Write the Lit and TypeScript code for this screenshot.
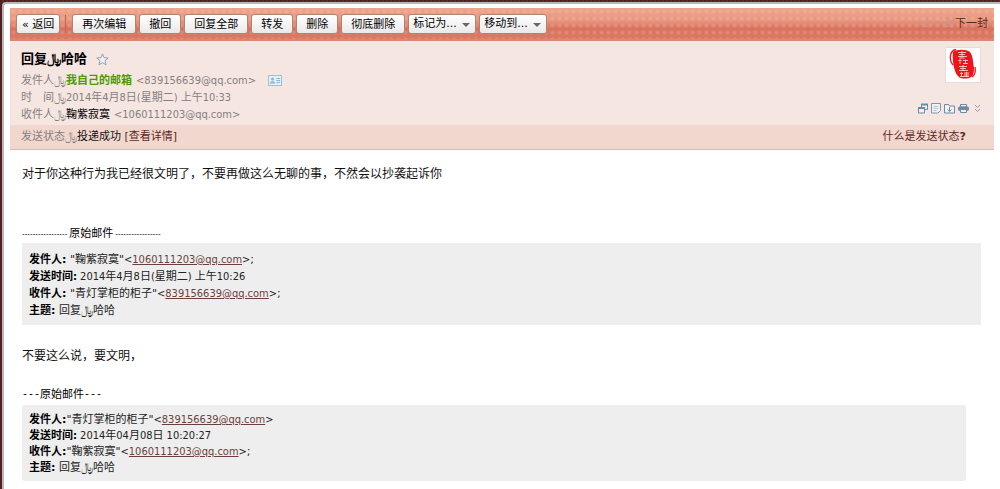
import { LitElement, html, css } from "lit";
import { customElement } from "lit/decorators.js";

const RIAL = "\uFDFC\u200E";

const star = html`<svg width="13" height="13" viewBox="0 0 13 13" fill="#f3f0f2" stroke="#8fa0b5" aria-hidden="true"><path d="M6.500 .9 8 4.700l4.200.3-3.200 2.700 1 4.200-3.500-2.300L3 11.900l1-4.200L.8 5l4.200-.3z"/></svg>`;

const card = html`<svg width="14" height="11" viewBox="0 0 14 11" aria-hidden="true">
  <rect x=".5" y=".5" width="13" height="10" fill="#e3eef6" stroke="#a3bfd6"/>
  <circle cx="4.500" cy="4" r="1.500" fill="#8fb2d0"/><path d="M2 8.500c0-3 5-3 5 0z" fill="#8fb2d0"/>
  <path d="M8.500 3.500H12M8.500 5.500H12M8.500 7.500H12" stroke="#8fb2d0"/></svg>`;

const seal = html`<svg width="34" height="34" viewBox="0 0 34 34" aria-hidden="true">
  <path d="M7 4C11 1 20 1 24 4c3 4 3 10 4 16 0 6-1 9-5 10-4 1-9 1-11-2C8 24 6 12 7 4z" fill="#f01418"/>
  <path d="M10 1.500C3 3 3 12 7 17M29 19c1 5 0 8-3 10" fill="none" stroke="#f01418" stroke-width="1.300"/>
  <g fill="none" stroke="#ffd0cc" stroke-width=".9">
    <path d="M12 4.500h8M13 6.500h6M16 3v6M12 8.500h9M13.500 10h5"/>
    <path d="M12.500 12.500h3M14 11v5M17 12.500h5M19.500 11.500v4.500M17 15.500h5"/>
    <path d="M13 18.500h8M14 20.500h6M17 17v6M13 22.500h9"/>
    <path d="M14 25.500h3M15.500 24v5M18 25h5M18 27h5M20.500 24v5M14 28.500h9"/>
  </g></svg>`;

const tools = [
  { label: "新窗口打开", icon: html`<svg width="10" height="11" viewBox="0 0 10 11" fill="#eef2f5" stroke="#6f8aa3"><path d="M3.500 1.500h6v5h-6z"/><path d="M3 1.500h7" stroke-width="2"/><path d="M.5 4.500h6v5.500h-6z"/><path d="M0 5h7" stroke-width="2"/></svg>` },
  { label: "添加备注", icon: html`<svg width="10" height="11" viewBox="0 0 10 11" fill="#eef2f5" stroke="#7f98ae"><path d="M.5 .5h9v7l-2.500 2.500H.5z"/><path d="M2.500 3.500h5M2.500 5.500h5M2.500 7.500h3" stroke="#b5c5d3"/></svg>` },
  { label: "保存", icon: html`<svg width="11" height="11" viewBox="0 0 11 11" fill="#eef2f5" stroke="#6f8aa3"><path d="M.5 1.500h4l1 1.500h5v7H.5z"/><path d="M5.500 4v4M3.500 6.500l2 2 2-2" fill="none"/></svg>` },
  { label: "打印", icon: html`<svg width="11" height="11" viewBox="0 0 11 11" fill="#eef2f5" stroke="#6f8aa3"><path d="M2.500 1.500h6V4h-6z"/><rect x=".5" y="4" width="10" height="3.500" rx="1" fill="#6f8aa3"/><path d="M2.500 6.500h6v3h-6z"/></svg>` },
  { label: "展开", icon: html`<svg width="7" height="9" viewBox="0 0 7 9" fill="none" stroke="#8a9aa8"><path d="M1 1l2.500 2.500L6 1M1 5l2.500 2.500L6 5"/></svg>` },
];

@customElement("app-root")
export class AppRoot extends LitElement {
  static styles = css`
    * { box-sizing: border-box; }
    :host {
      display: block;
      min-height: 100vh;
      padding: 2px 0 0 2px;
      background: repeating-linear-gradient(90deg, #551f20 0 2px, #642a2b 2px 4px);
      font: 11px/16px "DejaVu Sans", "Noto Sans CJK SC", sans-serif;
      color: #111;
    }
    .sheet {
      min-height: calc(100vh - 2px);
      padding: 4px 6px 8px 6px;
      border: 0 solid #b4bbb8;
      border-width: 2px 0 0 2px;
      border-top-left-radius: 4px;
      background: #fff;
    }
    .bar {
      display: flex;
      align-items: center;
      height: 33px;
      padding: 0 6px;
      gap: 3px;
      border-bottom: 2px solid #d98873;
      background:
        radial-gradient(circle, rgba(255, 205, 180, 0.22) 1px, transparent 3px) 0 0 / 7px 7px,
        linear-gradient(#eda58b, #e89680 40%, #d8735f 65%, #db7863);
    }
    button, select { margin: 0; font: inherit; }
    .btn {
      height: 20px;
      padding: 1px 9px 0;
      border: 1px solid #b08474;
      border-radius: 3px;
      background: linear-gradient(#fff, #e9e9e9);
      line-height: 17px;
      color: #000;
      white-space: nowrap;
    }
    .back { padding: 1px 5px 0; }
    .sep { width: 1px; height: 18px; margin: 0 3px 0 2px; background: #c0695a; }
    .drop { width: 68px; padding: 0 16px 0 4px; appearance: none; }
    .picker { position: relative; display: flex; }
    .caret {
      position: absolute;
      right: 6px;
      top: 9px;
      border: solid transparent;
      border-width: 4px 4px 0;
      border-top-color: #666;
      pointer-events: none;
    }
    .pager { display: flex; margin-left: auto; }
    a { color: #5a2a24; text-decoration: none; }
    .dim { color: #cc9488; }
    .head { display: flex; justify-content: space-between; padding: 9px 13px 2px 11px; background: #f5e6e1; }
    h1 { display: flex; align-items: center; gap: 9px; margin: 0 0 4px; font-size: 13px; line-height: 18px; color: #000; }
    .line { display: flex; align-items: center; gap: 4px; line-height: 17px; color: #858180; }
    .line svg { margin-left: 8px; }
    .date { font-family: "DejaVu Sans Condensed", "Noto Sans CJK SC", sans-serif; }
    .me { color: #4b9b00; font-weight: bold; }
    .name { color: #000; }
    .label { color: #858180; }
    .side { display: flex; flex-direction: column; align-items: flex-end; justify-content: space-between; padding: 0 0 9px; }
    .avatar { width: 36px; height: 36px; margin: -3px 0 0; border: 1px solid #eadbd6; background: #fff; }
    .tools { display: flex; gap: 3px; align-items: center; }
    .tool { display: flex; padding: 0; border: 0; background: none; }
    .tool:last-child { margin-left: 2px; }
    .state { display: flex; justify-content: space-between; padding: 4px 28px 4px 11px; border-bottom: 1px solid #d9bdb5; background: #f2d7cf; }
    .body { padding: 15px 12px 0; }
    p { margin: 0; font-size: 12px; line-height: 18px; }
    .origin { display: flex; align-items: center; gap: 2px; margin-top: 43px; color: #000; }
    .rule { font: 8px/16px "Liberation Sans", sans-serif; }
    .marks { font: 10px/16px "Liberation Mono", monospace; }
    .quote { margin: 1px 1px 0 0; padding: 8px 7px 6px; background: #eee; line-height: 17px; color: #222; }
    .quote + p { margin-top: 22px; }
    p + .origin.plain { margin-top: 22px; gap: 0; }
    .tight { margin: 2px 16px 0 0; padding: 7px 7px 5px; border-radius: 3px; line-height: 16px; }
    .quote a { color: #6b3f3b; text-decoration: underline; }
    .quote b { color: #000; }
  `;

  private link(address: string) {
    return html`<span class="date">&lt;<a href="mailto:${address}">${address}</a>&gt;</span>`;
  }

  render() {
    return html`<main class="sheet">
      <nav class="bar">
        <button class="btn back">« 返回</button><span class="sep"></span>
        ${["再次编辑", "撤回", "回复全部", "转发", "删除", "彻底删除"].map((t) => html`<button class="btn">${t}</button>`)}
        ${["标记为...", "移动到..."].map(
          (t) => html`<span class="picker"><select class="btn drop" aria-label=${t}><option>${t}</option></select><i class="caret"></i></span>`
        )}
        <span class="pager"><a class="dim" href="#prev">上一封</a><a href="#next">下一封</a></span>
      </nav>
      <header class="head">
        <div>
          <h1>回复${RIAL}哈哈 ${star}</h1>
          <div class="line"><span>发件人${RIAL}<span class="me">我自己的邮箱</span></span><span class="date">&lt;839156639@qq.com&gt;</span>${card}</div>
          <div class="line"><span class="date">时　间${RIAL}2014年4月8日(星期二) 上午10:33</span></div>
          <div class="line"><span>收件人${RIAL}<span class="name">鞠紫寂寞</span></span><span class="date">&lt;1060111203@qq.com&gt;</span></div>
        </div>
        <div class="side">
          <div class="avatar">${seal}</div>
          <div class="tools">${tools.map((t) => html`<button class="tool" aria-label=${t.label}>${t.icon}</button>`)}</div>
        </div>
      </header>
      <div class="state">
        <span><span class="label">发送状态${RIAL}</span>投递成功 <a href="#detail">[查看详情]</a></span>
        <a href="#help">什么是发送状态<b>?</b></a>
      </div>
      <section class="body">
        <p>对于你这种行为我已经很文明了，不要再做这么无聊的事，不然会以抄袭起诉你</p>
        <div class="origin"><span class="rule">-----------------</span>原始邮件<span class="rule">-----------------</span></div>
        <div class="quote">
          <div><b>发件人:</b> "鞠紫寂寞"${this.link("1060111203@qq.com")};</div>
          <div class="date"><b>发送时间:</b> 2014年4月8日(星期二) 上午10:26</div>
          <div><b>收件人:</b> "青灯掌柜的柜子"${this.link("839156639@qq.com")};</div>
          <div><b>主题:</b> 回复${RIAL}哈哈</div>
        </div>
        <p>不要这么说，要文明，</p>
        <div class="origin plain"><span class="marks">---</span>原始邮件<span class="marks">---</span></div>
        <div class="quote tight">
          <div><b>发件人:</b>"青灯掌柜的柜子"${this.link("839156639@qq.com")}</div>
          <div class="date"><b>发送时间:</b> 2014年04月08日 10:20:27</div>
          <div><b>收件人:</b>"鞠紫寂寞"${this.link("1060111203@qq.com")};</div>
          <div><b>主题:</b> 回复${RIAL}哈哈</div>
        </div>
      </section>
    </main>`;
  }
}
